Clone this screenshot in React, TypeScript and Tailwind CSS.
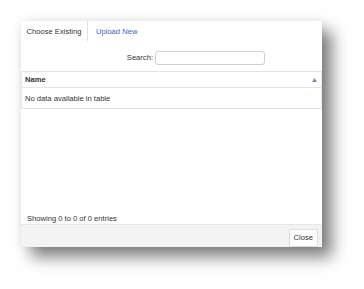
import React from 'react'

// File picker dialog: tabs, search, empty data table, footer
export default function App() {
  return (
    <div className="w-[364px] h-[289px] bg-white pt-[21px] pl-[21px] font-['Liberation_Sans',Arial,sans-serif] text-[7.6px] text-[#333]">
      <div className="w-[301px] h-[226px] bg-white flex flex-col shadow-[10px_10px_15px_rgba(0,0,0,0.5),0_0_8px_rgba(0,0,0,0.08)]">
        {/* Tabs */}
        <div className="h-[20px] flex items-stretch">
          <div className="w-[67px] flex items-center justify-center border-r border-[#e4e4e4] bg-white pt-[1px]">
            Choose Existing
          </div>
          <div className="flex items-center pl-[8px] pt-[1px] text-[#2a66d9]">Upload New</div>
        </div>

        {/* Search */}
        <div className="h-[30px] flex items-start justify-end pt-[10px] pr-[57px] gap-[2px]">
          <span className="leading-[14px]">Search:</span>
          <input className="w-[110px] h-[14px] border border-[#cfcfcf] rounded-[3px] outline-none" />
        </div>

        {/* Table */}
        <div className="border-x border-[#e8e8e8]">
          <div className="h-[17px] flex items-center justify-between px-[3px] pt-[1px] border-y border-[#e4e4e4] font-bold">
            <span>Name</span>
            <svg width="5" height="4" viewBox="0 0 5 4" className="mr-[1px]">
              <path d="M2.5 0 L5 4 L0 4 Z" fill="#7b84d9" />
            </svg>
          </div>
          <div className="h-[21px] flex items-center px-[3px] pt-[2px] border-b border-[#e4e4e4]">
            No data available in table
          </div>
        </div>

        <div className="flex-1" />

        {/* Info */}
        <div className="h-[10px] pl-[6px] flex items-center">Showing 0 to 0 of 0 entries</div>

        {/* Footer */}
        <div className="h-[23px] bg-[#f3f3f3] border-t border-[#e6e6e6] flex items-start justify-end pt-[4px] pr-[4px]">
          <button className="h-[18px] px-[4px] bg-white border border-[#dcdcdc] rounded-[2px] text-[7.6px] text-[#333]">
            Close
          </button>
        </div>
      </div>
    </div>
  )
}
